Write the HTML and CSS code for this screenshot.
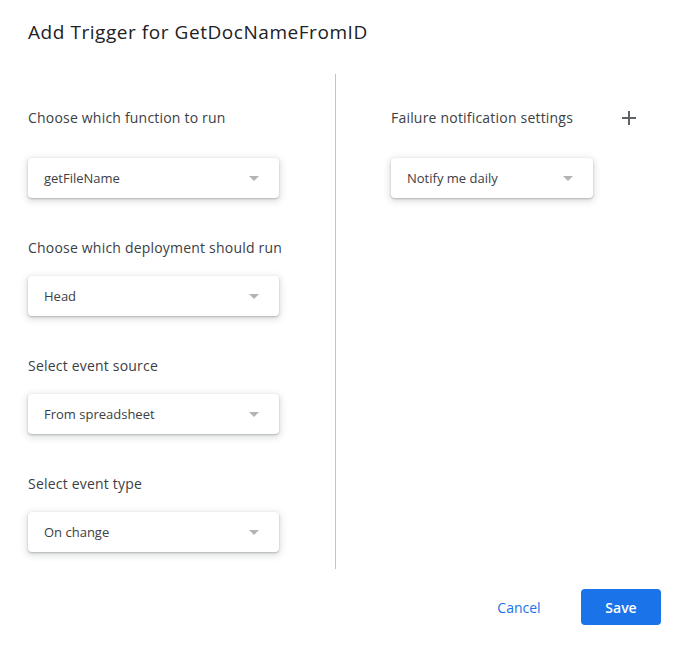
FILE: index.html
```html
<!DOCTYPE html>
<html>
<head>
<meta charset="utf-8">
<link rel="stylesheet" href="styles.css">
</head>
<body>
<div class="dialog">
  <h1 class="title">Add Trigger for GetDocNameFromID</h1>
  <div class="content">
    <div class="col-left">
      <div class="section first">
        <div class="label">Choose which function to run</div>
        <div class="select wide"><span>getFileName</span><span class="arrow"></span></div>
      </div>
      <div class="section">
        <div class="label">Choose which deployment should run</div>
        <div class="select wide"><span>Head</span><span class="arrow"></span></div>
      </div>
      <div class="section">
        <div class="label">Select event source</div>
        <div class="select wide"><span>From spreadsheet</span><span class="arrow"></span></div>
      </div>
      <div class="section">
        <div class="label">Select event type</div>
        <div class="select wide"><span>On change</span><span class="arrow"></span></div>
      </div>
    </div>
    <div class="divider"></div>
    <div class="col-right">
      <div class="section first">
        <div class="label-row">
          <div class="label">Failure notification settings</div>
          <svg class="plus" width="14" height="14" viewBox="0 0 14 14"><path d="M7 0v14M0 7h14" stroke="#5f6368" stroke-width="2" fill="none"/></svg>
        </div>
        <div class="select narrow"><span>Notify me daily</span><span class="arrow"></span></div>
      </div>
    </div>
  </div>
  <div class="footer">
    <button class="btn cancel">Cancel</button>
    <button class="btn save">Save</button>
  </div>
</div>
</body>
</html>
```
FILE: styles.css
```css
html, body {
  margin: 0;
  padding: 0;
  background: #fff;
}
body {
  font-family: "Open Sans", Roboto, sans-serif;
  color: #202124;
}
.dialog {
  width: 682px;
  height: 652px;
  box-sizing: border-box;
  padding-top: 20px;
}
.title {
  margin: 0 0 30px 28px;
  font-family: "Open Sans", Roboto, sans-serif;
  font-weight: 400;
  font-size: 19px;
  letter-spacing: 0.55px;
  line-height: 24px;
  color: #202124;
}
.content {
  display: flex;
  height: 495px;
}
.col-left {
  width: 335px;
  box-sizing: border-box;
  padding: 34px 0 0 28px;
}
.divider {
  width: 1px;
  background: #c4c4c4;
}
.col-right {
  flex: 1;
  padding: 34px 46px 0 55px;
}
.section {
  margin-bottom: 40px;
}
.label {
  font-size: 14px;
  line-height: 20px;
  letter-spacing: 0.2px;
  color: #3c4043;
  margin-bottom: 18px;
}
.section.first .label {
  margin-bottom: 30px;
}
.label-row {
  display: flex;
  justify-content: space-between;
  align-items: flex-start;
}
.label-row .label {
  margin-bottom: 30px;
}
.plus {
  margin-top: 3px;
}
.select {
  height: 40px;
  box-sizing: border-box;
  border-radius: 4px;
  background: #fff;
  box-shadow: 0 1px 2px rgba(60,64,67,0.3), 0 2px 6px 2px rgba(60,64,67,0.15);
  display: flex;
  align-items: center;
  justify-content: space-between;
  padding: 0 20px 0 16px;
  font-size: 13px;
  color: #3c4043;
}
.select.wide { width: 251px; }
.select.narrow { width: 202px; }
.arrow {
  width: 0;
  height: 0;
  border-left: 5px solid transparent;
  border-right: 5px solid transparent;
  border-top: 5px solid #b3b3b3;
}
.footer {
  display: flex;
  justify-content: flex-end;
  gap: 22px;
  padding-right: 21px;
  margin-top: 20px;
}
.btn {
  height: 36px;
  width: 80px;
  border: none;
  border-radius: 4px;
  font-family: "Open Sans", Roboto, sans-serif;
  font-size: 14px;
  font-weight: 600;
  padding: 0;
  cursor: pointer;
}
.cancel {
  background: transparent;
  color: #1a73e8;
  font-weight: 400;
}
.save {
  background: #1a73e8;
  color: #fff;
}
```
